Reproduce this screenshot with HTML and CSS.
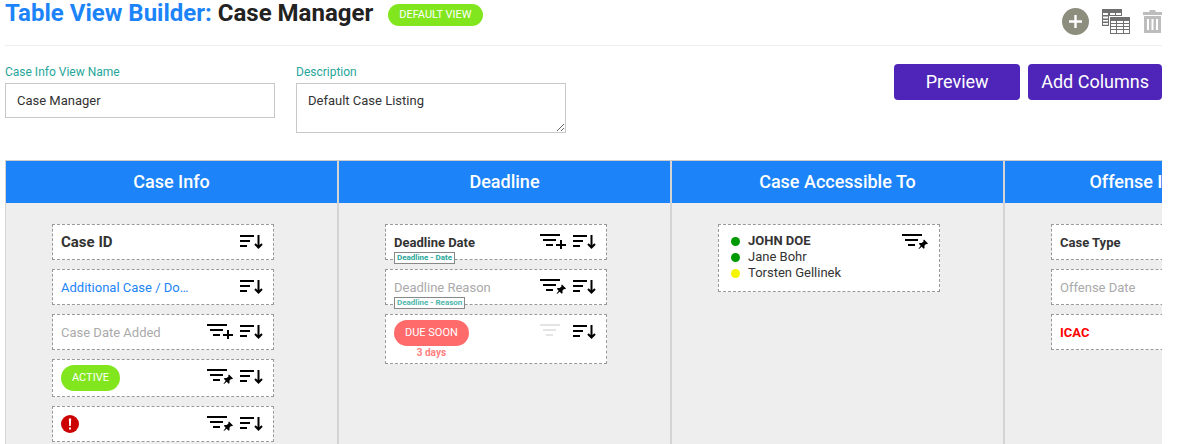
FILE: index.html
```html
<!DOCTYPE html>
<html lang="en">
<head>
  <meta charset="UTF-8">
  <meta name="viewport" content="width=device-width, initial-scale=1.0">
  <title>Table View Builder</title>
  <link rel="stylesheet" href="styles.css">
</head>
<body>

  <!-- icon shapes used below -->
  <svg class="icon-defs" aria-hidden="true">
    <symbol id="filter" viewBox="0 0 27 17">
      <path d="M0 2h20M3 7h13M6 12h7" fill="none" stroke="currentColor" stroke-width="2"/>
    </symbol>
    <symbol id="filter-add" viewBox="0 0 27 17">
      <path d="M0 2h20M3 7h13M6 12h7M16 12h10M21 7v9" fill="none" stroke="currentColor" stroke-width="2"/>
    </symbol>
    <symbol id="filter-pin" viewBox="0 0 27 17">
      <path d="M0 2h20M3 7h13M6 12h7" fill="none" stroke="currentColor" stroke-width="2"/>
      <path d="M22 6.500l4 4-1 .7-1-.2-1.600 1.800.2 2.200-.9.8-2-2L17 16l-.5-.3 2.200-3-1.900-1.900.9-.9 2 .2L21.500 8.500l-.2-1.200z" fill="currentColor"/>
    </symbol>
    <symbol id="sort" viewBox="0 0 23 17">
      <path d="M0 3h14M0 8h10M0 13h7" fill="none" stroke="currentColor" stroke-width="2"/>
      <path d="M18.500 2v12M15 11l3.500 3.500L22 11" fill="none" stroke="currentColor" stroke-width="2"/>
    </symbol>
  </svg>

  <div class="topbar">
    <h1><span>Table View Builder:</span> Case Manager</h1>
    <span class="pill">DEFAULT VIEW</span>
    <div class="tools">
      <button type="button" aria-label="Add view">
        <svg width="27" height="27" viewBox="0 0 27 27">
          <circle cx="13.500" cy="13.500" r="13.500" fill="#8d8e7e"/>
          <path d="M13.500 7v13M7 13.500h13" stroke="#fff" stroke-width="2.400"/>
        </svg>
      </button>
      <button type="button" aria-label="Copy view">
        <svg width="28" height="25" viewBox="0 0 28 25">
          <path d="M0 0h20v17H0z" fill="#707070"/>
          <path d="M1 4h5v2H1zM8 4h5v2H8zM14 4h5v2h-5zM1 7.500h5v2H1zM8 7.500h5v2H8zM1 11h5v1.500H1zM1 14h5v1.800H1z" fill="#fff"/>
          <path d="M7 7h21v18H7z" fill="#fff"/>
          <path d="M8 8h20v17H8z" fill="#707070"/>
          <path d="M9 12h5v2H9zM15 12h6v2h-6zM22 12h5v2h-5zM9 15h5v2H9zM15 15h6v2h-6zM22 15h5v2h-5zM9 18h5v2H9zM15 18h6v2h-6zM22 18h5v2h-5zM9 21h5v3H9zM15 21h6v3h-6zM22 21h5v3h-5z" fill="#fff"/>
        </svg>
      </button>
      <button type="button" aria-label="Delete view">
        <svg width="19" height="23" viewBox="0 0 19 23">
          <path d="M0 2h6l1-2h5l1 2h6v3H0zM1 6h17v17H1z" fill="#bdbdbd"/>
          <path d="M5 9v11M9.500 9v11M14 9v11" stroke="#fff" stroke-width="2"/>
        </svg>
      </button>
    </div>
  </div>

  <form class="settings">
    <div class="form-group">
      <label for="name">Case Info View Name</label>
      <input type="text" id="name" value="Case Manager">
    </div>
    <div class="form-group">
      <label for="description">Description</label>
      <textarea id="description">Default Case Listing</textarea>
    </div>
    <div class="actions">
      <button type="button">Preview</button>
      <button type="button">Add Columns</button>
    </div>
  </form>

  <div class="board">
    <div class="column">
      <h2>Case Info</h2>
      <div class="cards">
        <div class="card">
          <span class="field field-id">Case ID</span>
          <button type="button" class="icon" aria-label="Sort"><svg width="23" height="17"><use href="#sort"/></svg></button>
        </div>
        <div class="card">
          <a class="field" href="#">Additional Case / Do…</a>
          <button type="button" class="icon" aria-label="Sort"><svg width="23" height="17"><use href="#sort"/></svg></button>
        </div>
        <div class="card">
          <span class="field muted">Case Date Added</span>
          <button type="button" class="icon" aria-label="Add filter"><svg width="27" height="17"><use href="#filter-add"/></svg></button>
          <button type="button" class="icon" aria-label="Sort"><svg width="23" height="17"><use href="#sort"/></svg></button>
        </div>
        <div class="card card-pill">
          <span class="status">ACTIVE</span>
          <button type="button" class="icon" aria-label="Pinned filter"><svg width="27" height="17"><use href="#filter-pin"/></svg></button>
          <button type="button" class="icon" aria-label="Sort"><svg width="23" height="17"><use href="#sort"/></svg></button>
        </div>
        <div class="card">
          <svg class="alert" width="18" height="18" viewBox="0 0 18 18">
            <circle cx="9" cy="9" r="9" fill="#c00"/>
            <path d="M7.800 3.500h2.400L9.800 11H8.200zM8 12.500h2v2H8z" fill="#fff"/>
          </svg>
          <button type="button" class="icon" aria-label="Pinned filter"><svg width="27" height="17"><use href="#filter-pin"/></svg></button>
          <button type="button" class="icon" aria-label="Sort"><svg width="23" height="17"><use href="#sort"/></svg></button>
        </div>
      </div>
    </div>

    <div class="column">
      <h2>Deadline</h2>
      <div class="cards">
        <div class="card">
          <span class="field strong">Deadline Date</span>
          <button type="button" class="icon" aria-label="Add filter"><svg width="27" height="17"><use href="#filter-add"/></svg></button>
          <button type="button" class="icon" aria-label="Sort"><svg width="23" height="17"><use href="#sort"/></svg></button>
          <span class="tag">Deadline - Date</span>
        </div>
        <div class="card">
          <span class="field muted">Deadline Reason</span>
          <button type="button" class="icon" aria-label="Pinned filter"><svg width="27" height="17"><use href="#filter-pin"/></svg></button>
          <button type="button" class="icon" aria-label="Sort"><svg width="23" height="17"><use href="#sort"/></svg></button>
          <span class="tag tag-light">Deadline - Reason</span>
        </div>
        <div class="card card-due">
          <div class="due">
            <span class="status status-due">DUE SOON</span>
            <span class="days">3 days</span>
          </div>
          <button type="button" class="icon" aria-label="Filter" disabled><svg width="27" height="17"><use href="#filter"/></svg></button>
          <button type="button" class="icon" aria-label="Sort"><svg width="23" height="17"><use href="#sort"/></svg></button>
        </div>
      </div>
    </div>

    <div class="column">
      <h2>Case Accessible To</h2>
      <div class="cards">
        <div class="card card-people">
          <ul class="people">
            <li class="owner">JOHN DOE</li>
            <li>Jane Bohr</li>
            <li class="away">Torsten Gellinek</li>
          </ul>
          <button type="button" class="icon" aria-label="Pinned filter"><svg width="27" height="17"><use href="#filter-pin"/></svg></button>
        </div>
      </div>
    </div>

    <div class="column">
      <h2>Offense Information</h2>
      <div class="cards">
        <div class="card">
          <span class="field strong">Case Type</span>
        </div>
        <div class="card">
          <span class="field muted">Offense Date</span>
        </div>
        <div class="card">
          <span class="field strong red">ICAC</span>
        </div>
      </div>
    </div>
  </div>

</body>
</html>
```
FILE: styles.css
```css
* {
  box-sizing: border-box;
}
body {
  margin: 0;
  padding: 0 30px 0 5px;
  height: 100vh;
  display: flex;
  flex-direction: column;
  overflow: hidden;
  font-family: Roboto, sans-serif;
  font-size: 13px;
  color: #333;
  background-color: #fff;
}
button {
  font-family: inherit;
  border: none;
  padding: 0;
  background: none;
  cursor: pointer;
}
svg {
  display: block;
}
.icon-defs {
  display: none;
}

/* title row */
.topbar {
  display: flex;
  align-items: flex-start;
  height: 46px;
  flex: none;
  border-bottom: 1px solid #eee;
}
h1 {
  margin: 0;
  font-size: 24px;
  line-height: 26px;
  font-weight: 700;
  color: #222;
}
h1 span {
  color: #1c84f8;
}
.pill {
  margin: 4px 0 0 15px;
  padding: 0 11px;
  border-radius: 11px;
  font-size: 11px;
  line-height: 22px;
  color: #fff;
  background-color: #82e61e;
}
.tools {
  display: flex;
  align-items: center;
  gap: 13px;
  margin: 8px 0 0 auto;
}

/* view settings */
.settings {
  display: flex;
  align-items: flex-start;
  gap: 21px;
  flex: none;
  padding: 18px 0 27px;
}
.form-group {
  width: 270px;
}
label {
  display: block;
  margin-bottom: 3px;
  font-size: 12px;
  line-height: 16px;
  color: #26a69a;
}
input, textarea {
  display: block;
  width: 100%;
  height: 35px;
  padding: 8px 11px;
  border: 1px solid #c8c8c8;
  font-family: inherit;
  font-size: 13px;
  line-height: 17px;
  color: #333;
  background-color: #fff;
}
textarea {
  height: 50px;
}
.actions {
  display: flex;
  gap: 8px;
  margin-left: auto;
}
.actions button {
  min-width: 126px;
  padding: 0 13px;
  border-radius: 4px;
  font-size: 18px;
  line-height: 36px;
  color: #fff;
  background-color: #4e25b8;
}

/* columns */
.board {
  display: flex;
  flex: 1;
  min-height: 0;
  overflow: hidden;
  border-top: 1px solid #ccc;
}
.column {
  flex: 0 0 333px;
  border: solid #d4d4d4;
  border-width: 0 1px;
  background-color: #eee;
}
h2 {
  margin: 0;
  font-size: 18px;
  line-height: 42px;
  font-weight: 500;
  text-align: center;
  color: #fff;
  background-color: #1c84f8;
}
.cards {
  display: flex;
  flex-direction: column;
  gap: 9px;
  width: 222px;
  margin: 21px 0 0 46px;
}
.card {
  position: relative;
  display: flex;
  align-items: flex-start;
  gap: 6px;
  height: 36px;
  padding: 8px 10px 0 8px;
  border: 1px dashed #999;
  background-color: #fff;
}
.card > :first-child {
  margin-right: auto;
}
.field {
  line-height: 20px;
  white-space: nowrap;
  text-decoration: none;
}
.field-id {
  font-size: 15px;
  line-height: 18px;
  font-weight: 700;
}
a.field {
  color: #1c84f8;
}
.muted {
  color: #aaa;
}
.strong {
  font-weight: 700;
}
.red {
  color: #f00;
}
.icon {
  color: #000;
}
.icon:disabled {
  color: #e4e4e4;
}
.status {
  padding: 0 11px;
  margin-top: -3px;
  border-radius: 13px;
  font-size: 11px;
  line-height: 26px;
  color: #fff;
  background-color: #82e61e;
}
.card-pill {
  height: 38px;
}
.card-due {
  height: 50px;
}
.due {
  display: flex;
  flex-direction: column;
  align-items: center;
}
.status-due {
  background-color: #ff6b6b;
}
.days {
  font-size: 10px;
  line-height: 14px;
  font-weight: 700;
  color: #ff8080;
}
.tag {
  position: absolute;
  left: 8px;
  bottom: -5px;
  padding: 0 2px;
  border: 1px solid #888;
  font-size: 8px;
  line-height: 10px;
  font-weight: 700;
  color: #26a69a;
  background-color: #fff;
}
.tag-light {
  color: #4db6ac;
}
.card-people {
  height: 68px;
}
.people {
  margin: 0;
  padding: 0;
  list-style: none;
  line-height: 16px;
}
.people li {
  display: flex;
  align-items: center;
  gap: 8px;
  padding-left: 4px;
}
.people li::before {
  content: "";
  width: 9px;
  height: 9px;
  border-radius: 50%;
  background-color: #090;
}
.people .away::before {
  background-color: #f5f500;
}
.owner {
  font-weight: 700;
}
```
